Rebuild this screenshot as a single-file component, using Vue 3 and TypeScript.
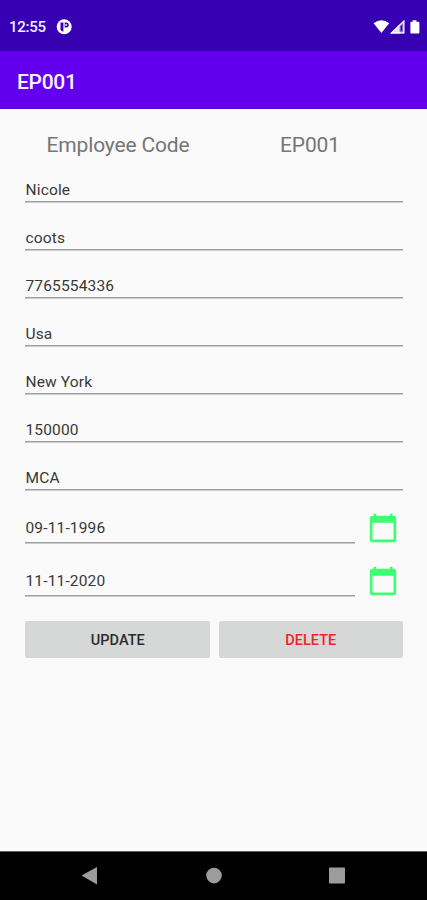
<script setup lang="ts">
import { ref } from 'vue'

interface Field {
  id: string
  value: string
}

const code = ref('EP001')
const fields = ref<Field[]>([
  { id: 'first-name', value: 'Nicole' },
  { id: 'last-name', value: 'coots' },
  { id: 'phone', value: '7765554336' },
  { id: 'country', value: 'Usa' },
  { id: 'city', value: 'New York' },
  { id: 'salary', value: '150000' },
  { id: 'degree', value: 'MCA' },
])
const dates = ref<Field[]>([
  { id: 'birth', value: '09-11-1996' },
  { id: 'joined', value: '11-11-2020' },
])
</script>

<template>
  <div class="screen">
    <div class="status">
      <span class="clock">12:55</span>
      <svg class="notice" width="16" height="16" viewBox="0 0 16 16">
        <circle cx="8.2" cy="7.8" r="7.5" fill="#fff" />
        <path d="M4.5 3.6H7.4V12.6H6.6L4.5 11Z" fill="#3700b3" />
        <path d="M8.7 3.6H10.2A2.5 2.5 0 0 1 10.2 8.6H8.7Z" fill="#3700b3" />
        <circle cx="10.1" cy="5.9" r="0.9" fill="#fff" />
      </svg>
      <svg class="signals" width="50" height="18" viewBox="0 0 50 18">
        <path d="M0.6 5.3Q8.4 -0.9 16.2 5.3L8.4 15Z" fill="#fff" />
        <path d="M17.2 15.5L31.4 2V15.5Z" fill="#fff" fill-opacity="0.45" />
        <path d="M17.2 15.5L26.6 6.6V15.5Z" fill="#fff" fill-opacity="0.75" />
        <path d="M18.6 14.9L30.8 3.2V14.9Z" fill="none" stroke="#fff" stroke-width="1.2" />
        <path d="M28.4 7.5V12.8" stroke="#3700b3" stroke-width="1.4" />
        <path d="M39.6 2.2H43.4V3.8H45.2Q46.4 3.8 46.4 5V14.4Q46.4 15.6 45.2 15.6H38.6Q37.4 15.6 37.4 14.4V5Q37.4 3.8 38.6 3.8H39.6Z" fill="#fff" />
      </svg>
    </div>
    <header class="appbar">{{ code }}</header>
    <main class="content">
      <div class="code-row">
        <span>Employee Code</span>
        <span>{{ code }}</span>
      </div>
      <div v-for="f in fields" :key="f.id" class="field">{{ f.value }}</div>
      <div v-for="d in dates" :key="d.id" class="date-row">
        <div class="field date">{{ d.value }}</div>
        <svg class="calendar" width="28" height="31" viewBox="0 0 28 31">
          <path fill="#3dff74" fill-rule="evenodd" d="M4.6 0.8H7.2V2.8H20.8V0.8H23.4V2.8H24.6Q27.2 2.8 27.2 5.4V26.6Q27.2 29.2 24.6 29.2H3.4Q0.8 29.2 0.8 26.6V5.4Q0.8 2.8 3.4 2.8H4.6ZM3.5 9.8V26.5H24.5V9.8Z" />
        </svg>
      </div>
      <div class="actions">
        <button type="button" class="button">UPDATE</button>
        <button type="button" class="button danger">DELETE</button>
      </div>
    </main>
    <nav class="navbar">
      <svg width="427" height="48" viewBox="0 0 427 48">
        <path d="M81.5 23.5L97 15V32.5Z" fill="#9c9c9c" />
        <circle cx="214" cy="23.6" r="7.8" fill="#9c9c9c" />
        <rect x="329" y="15.5" width="16" height="16" rx="0.8" fill="#9c9c9c" />
      </svg>
    </nav>
  </div>
</template>

<style>
body {
  margin: 0;
  background: #fafafa;
}
</style>

<style scoped>
.screen {
  display: flex;
  flex-direction: column;
  width: 427px;
  height: 900px;
  overflow: hidden;
  background: #fafafa;
  font-family: Roboto, sans-serif;
}
.status {
  box-sizing: border-box;
  display: flex;
  align-items: center;
  height: 51px;
  padding: 2px 4px 0 9px;
  background: #3700b3;
  color: #f4f0ff;
}
.clock {
  width: 47px;
  font-size: 15px;
  font-weight: 500;
  letter-spacing: -0.25px;
}
.signals {
  margin-left: auto;
}
.appbar {
  box-sizing: border-box;
  height: 58px;
  padding: 2px 17px 0;
  background: #6200ee;
  color: #f8f4ff;
  font-size: 21px;
  font-weight: 500;
  line-height: 58px;
  letter-spacing: -0.3px;
}
.content {
  flex: 1;
  padding: 20px 24px 0 25px;
}
.code-row {
  display: grid;
  grid-template-columns: 1fr 1fr;
  height: 32px;
  margin: 0 -3px;
  color: #757575;
  font-size: 21px;
  line-height: 32px;
  letter-spacing: -0.15px;
  text-align: center;
}
.field {
  box-sizing: border-box;
  height: 48px;
  padding: 20px 0 0 0.5px;
  background: linear-gradient(#a0a0a0, #a0a0a0) 0 40px / 100% 1.5px no-repeat;
  color: #383838;
  font-size: 15.5px;
  line-height: 18px;
  letter-spacing: 0.15px;
}
.date-row {
  display: flex;
  justify-content: space-between;
  height: 53px;
}
.date {
  width: 330px;
  height: 53px;
  padding-top: 22px;
  background-position: 0 45px;
}
.calendar {
  margin: 16px 6px 0 0;
}
.actions {
  display: grid;
  grid-template-columns: 1fr 1fr;
  gap: 9px;
  margin-top: 18px;
}
.button {
  height: 37px;
  padding: 2px 0 0 1px;
  border: 0;
  border-radius: 2px;
  background: #d6d7d7;
  color: #2b2b2b;
  font: 500 14.5px Roboto, sans-serif;
}
.danger {
  padding-left: 0;
  color: #f52222;
}
.navbar {
  height: 48px;
  border-top: 1px solid #606060;
  background: #000;
}
.navbar svg {
  display: block;
}
</style>
